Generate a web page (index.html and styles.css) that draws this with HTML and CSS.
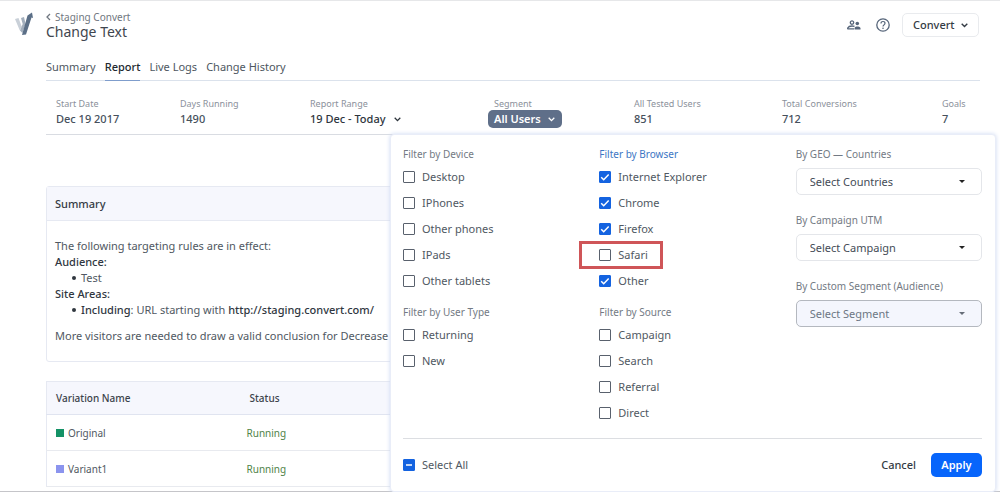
FILE: index.html
```html
<!DOCTYPE html>
<html lang="en">
<head>
<meta charset="utf-8">
<title>Change Text – Report</title>
<link rel="stylesheet" href="styles.css">
</head>
<body>
<div class="page">
  <header class="header">
    <svg class="logo" width="19" height="24" viewBox="0 0 19 24">
      <path d="M0 7l3.500-1 3.200 8.500-1.900 4z" fill="#c9d0d8"/>
      <path d="M6 6l3-1 1.600 7-3.200 9-2.400-2.500L7.700 12z" fill="#a3afbd"/>
      <path d="M12.500 3.500L17 .5l1 5.500-1.500-.4L11 22.500 7 23z" fill="#5b6f87"/>
    </svg>
    <div class="titles">
      <a class="back" href="#"><svg width="5" height="8" viewBox="0 0 5 8"><path d="M4 1L1 4l3 3" fill="none" stroke="currentColor" stroke-width="1.300"/></svg>Staging Convert</a>
      <h1 class="title">Change Text</h1>
    </div>
    <div class="tools">
      <button class="icon-button" aria-label="Collaborators"><svg width="14" height="10" viewBox="0 0 14 10"><circle cx="5" cy="2.600" r="1.700" fill="none" stroke="currentColor" stroke-width="1.300"/><circle cx="10.300" cy="3.500" r="1.800" fill="currentColor"/><path d="M.7 9.200V8C1.500 6.400 3.200 6 5 6c1 0 1.800.1 2.500.4M.7 8.900H7" fill="none" stroke="currentColor" stroke-width="1.300"/><path d="M7.500 9.600V8c.6-1.200 1.700-1.500 2.800-1.500 1.200 0 2.500.4 3.200 1.500v1.600z" fill="currentColor"/></svg></button>
      <button class="icon-button" aria-label="Help"><svg width="14" height="14" viewBox="0 0 14 14"><circle cx="7" cy="7" r="6.200" fill="none" stroke="currentColor" stroke-width="1.300"/><path d="M5 5.500C5 4.200 5.900 3.500 7 3.500s2 .7 2 1.800C9 6.800 7 6.900 7 8.500" fill="none" stroke="currentColor" stroke-width="1.200"/><circle cx="7" cy="10.300" r=".8" fill="currentColor"/></svg></button>
      <button class="account">Convert <svg width="7" height="5" viewBox="0 0 7 5"><path d="M.7.8l2.800 2.800L6.300.8" fill="none" stroke="currentColor" stroke-width="1.400"/></svg></button>
    </div>
  </header>

  <main class="main">
    <nav class="tabs">
      <a class="tab" href="#">Summary</a>
      <a class="tab tab-active" href="#">Report</a>
      <a class="tab" href="#">Live Logs</a>
      <a class="tab" href="#">Change History</a>
    </nav>

    <section class="stats">
      <div><div class="stat-label">Start Date</div><div class="stat-value">Dec 19 2017</div></div>
      <div><div class="stat-label">Days Running</div><div class="stat-value">1490</div></div>
      <div><div class="stat-label">Report Range</div><button class="range">19 Dec - Today <svg width="7" height="5" viewBox="0 0 7 5"><path d="M.7.8l2.800 2.800L6.300.8" fill="none" stroke="currentColor" stroke-width="1.300"/></svg></button></div>
      <div><div class="stat-label stat-label-inset">Segment</div><button class="segment" aria-expanded="true">All Users <svg width="7" height="5" viewBox="0 0 7 5"><path d="M.7.8l2.800 2.800L6.300.8" fill="none" stroke="currentColor" stroke-width="1.300"/></svg></button></div>
      <div><div class="stat-label">All Tested Users</div><div class="stat-value">851</div></div>
      <div><div class="stat-label">Total Conversions</div><div class="stat-value">712</div></div>
      <div><div class="stat-label">Goals</div><div class="stat-value">7</div></div>
    </section>

    <div class="content">
      <section class="card">
        <h2 class="card-title">Summary</h2>
        <div class="card-body">
          <p>The following targeting rules are in effect:</p>
          <p class="strong">Audience:</p>
          <ul><li>Test</li></ul>
          <p class="strong">Site Areas:</p>
          <ul><li><span class="strong">Including</span>: URL starting with <span class="strong">http://staging.convert.com/</span></li></ul>
          <p class="note">More visitors are needed to draw a valid conclusion for Decrease</p>
        </div>
      </section>

      <table class="variations">
        <thead><tr><th class="name-col">Variation Name</th><th>Status</th></tr></thead>
        <tbody>
          <tr><td><span class="swatch swatch-green"></span>Original</td><td class="running">Running</td></tr>
          <tr><td><span class="swatch swatch-violet"></span>Variant1</td><td class="running">Running</td></tr>
        </tbody>
      </table>

      <form class="panel">
        <div class="filters">
          <div class="column">
            <fieldset><legend>Filter by Device</legend>
              <label class="check"><input type="checkbox">Desktop</label>
              <label class="check"><input type="checkbox">IPhones</label>
              <label class="check"><input type="checkbox">Other phones</label>
              <label class="check"><input type="checkbox">IPads</label>
              <label class="check"><input type="checkbox">Other tablets</label>
            </fieldset>
            <fieldset><legend>Filter by User Type</legend>
              <label class="check"><input type="checkbox">Returning</label>
              <label class="check"><input type="checkbox">New</label>
            </fieldset>
          </div>
          <div class="column">
            <fieldset><legend class="active">Filter by Browser</legend>
              <label class="check"><input type="checkbox" checked>Internet Explorer</label>
              <label class="check"><input type="checkbox" checked>Chrome</label>
              <label class="check"><input type="checkbox" checked>Firefox</label>
              <label class="check check-marked"><input type="checkbox">Safari</label>
              <label class="check"><input type="checkbox" checked>Other</label>
            </fieldset>
            <fieldset><legend>Filter by Source</legend>
              <label class="check"><input type="checkbox">Campaign</label>
              <label class="check"><input type="checkbox">Search</label>
              <label class="check"><input type="checkbox">Referral</label>
              <label class="check"><input type="checkbox">Direct</label>
            </fieldset>
          </div>
          <div class="column column-selects">
            <div class="field"><label for="geo">By GEO — Countries</label><select id="geo"><option>Select Countries</option></select></div>
            <div class="field"><label for="utm">By Campaign UTM</label><select id="utm"><option>Select Campaign</option></select></div>
            <div class="field"><label for="custom">By Custom Segment (Audience)</label><select id="custom" disabled><option>Select Segment</option></select></div>
          </div>
        </div>
        <div class="actions">
          <label class="check"><input type="checkbox" class="partial">Select All</label>
          <button type="button" class="cancel">Cancel</button>
          <button type="button" class="apply">Apply</button>
        </div>
      </form>
    </div>
  </main>
</div>
</body>
</html>
```

FILE: styles.css
```css
* { box-sizing: border-box; }
body {
  margin: 0;
  background: #fff;
  color: #505862;
  font: 11px/16px "Noto Sans", sans-serif;
}
button {
  border: 0;
  padding: 0;
  background: none;
  color: inherit;
  font: inherit;
}
a { color: inherit; text-decoration: none; }
.page { min-height: 100vh; border-top: 1px solid #e6e7e9; border-bottom: 1px solid #c5c5c9; }

.header { display: flex; height: 44px; padding: 11px 21px 0 15px; align-items: flex-start; }
.titles { margin-left: 12px; }
.back { display: flex; align-items: center; gap: 4px; height: 10px; font-size: 10px; color: #707780; }
.title { margin: 0; font-size: 14px; line-height: 20px; font-weight: 400; color: #3f464e; }
.tools { display: flex; align-items: center; gap: 15px; margin-left: auto; padding-top: 1px; color: #56657a; }
.icon-button { display: flex; }
.account {
  display: flex;
  align-items: center;
  justify-content: space-between;
  width: 77px;
  height: 24px;
  margin-left: -3px;
  padding: 0 10px;
  border: 1px solid #e9ebee;
  border-radius: 5px;
  color: #343b44;
  font-weight: 500;
}

.main { padding: 0 0 0 46px; }
.tabs { display: flex; gap: 9px; height: 36px; padding-top: 12px; margin-right: 20px; border-bottom: 1px solid #dbe2ec; }
.tab { height: 24px; line-height: 20px; color: #4e5761; }
.tab-active { color: #22292f; font-weight: 500; border-bottom: 1px solid #7f9dcc; }

.stats {
  display: grid;
  grid-template-columns: 124fr 130fr 178fr 146fr 148fr 160fr 48fr;
  height: 54px;
  margin-right: 10px;
  padding: 17px 0 0 10px;
  border-bottom: 1px solid #d9dce2;
}
.stat-label { font-size: 9px; line-height: 12px; color: #8b919b; white-space: nowrap; }
.stat-label-inset { padding-left: 6px; }
.stat-value { line-height: 18px; color: #46505c; font-weight: 500; }
.range { display: flex; align-items: center; gap: 8px; height: 18px; font-weight: 500; color: #2e353d; }
.segment {
  display: flex;
  align-items: center;
  justify-content: space-between;
  width: 74px;
  height: 18px;
  padding: 0 7px 0 6px;
  border-radius: 5px;
  background: #5f6f89;
  color: #fff;
  font-weight: 600;
}

.content { position: relative; padding-top: 51px; }
.card { height: 176px; margin-right: 20px; border: 1px solid #e6e9f2; border-radius: 3px; }
.card-title {
  margin: 0;
  padding: 0 8px;
  line-height: 33px;
  font-size: 11px;
  font-weight: 500;
  color: #343b44;
  background: #f6f7fd;
  border-bottom: 1px solid #e6e9f2;
}
.card-body { padding: 17px 8px; white-space: nowrap; overflow: hidden; }
.card-body p { margin: 0; }
.card-body ul { margin: 0; padding-left: 17px; list-style: none; }
.card-body li { display: flex; align-items: center; white-space: pre; }
.card-body li::before { content: ""; width: 4px; height: 4px; margin-right: 5px; border-radius: 50%; background: #30373f; }
.card-body .note { margin-top: 10px; }
.strong { color: #30373f; font-weight: 500; }

.variations { width: calc(100% - 20px); margin-top: 19px; border: 1px solid #e6e9f2; border-collapse: collapse; }
.variations th { height: 33px; padding: 0 9px; background: #f6f7fd; text-align: left; font-size: 10px; font-weight: 500; color: #3c434b; border-bottom: 1px solid #e0e4f0; }
.variations td { height: 36px; padding: 0 9px; font-size: 10px; border-bottom: 1px solid #e8eaef; }
.name-col { width: 194px; }
.variations .running { color: #4f8348; padding-left: 6px; }
.swatch { display: inline-block; width: 8px; height: 8px; margin-right: 4px; }
.swatch-green { background: #149266; }
.swatch-violet { background: #8b94ee; }

.panel {
  position: absolute;
  top: -1px;
  right: 4px;
  width: 606px;
  padding: 10px 13px 0 12px;
  background: #fff;
  border: 1px solid #e9edf8;
  border-radius: 4px;
  box-shadow: 0 0 4px #cdd9f2;
}
.filters { display: grid; grid-template-columns: repeat(3, 1fr); gap: 10px; padding-bottom: 12px; border-bottom: 1px solid #dcdee2; }
.column { display: flex; flex-direction: column; gap: 9px; }
.column-selects { gap: 16px; }
fieldset { margin: 0; padding: 0; border: 0; min-width: 0; }
legend, .field label { display: block; padding: 0; height: 19px; line-height: 18px; font-size: 10px; color: #737a84; }
legend.active { color: #3d76c4; }
.check { display: flex; align-items: center; gap: 7px; width: fit-content; height: 26px; position: relative; }
.check input {
  appearance: none;
  width: 12px;
  height: 12px;
  margin: 0;
  border: 1px solid #59616d;
  border-radius: 1px;
  background: #fff center / 12px 12px no-repeat;
}
.check input:checked, .check .partial { border-color: #1463e0; background-color: #1463e0; }
.check input:checked { background-image: url("data:image/svg+xml,%3Csvg xmlns='http://www.w3.org/2000/svg' viewBox='0 0 12 12'%3E%3Cpath d='M2.200 6.200l2.500 2.500 5-5.200' fill='none' stroke='white' stroke-width='1.500'/%3E%3C/svg%3E"); }
.check .partial { background-image: url("data:image/svg+xml,%3Csvg xmlns='http://www.w3.org/2000/svg' viewBox='0 0 12 12'%3E%3Cpath d='M3 6h6' stroke='white' stroke-width='1.500'/%3E%3C/svg%3E"); }
.check-marked::after { content: ""; position: absolute; inset: -1px -15px -1px -20px; border: 3px solid #cf5558; }

.field { display: flex; flex-direction: column; gap: 4px; }
select {
  appearance: none;
  width: 100%;
  height: 27px;
  padding: 0 13px;
  border: 1px solid #e4e6ea;
  border-radius: 5px;
  font: inherit;
  color: #444c56;
  background: #fff url("data:image/svg+xml,%3Csvg xmlns='http://www.w3.org/2000/svg' viewBox='0 0 6 3'%3E%3Cpath d='M0 0h6L3 3z' fill='%23222'/%3E%3C/svg%3E") right 16px center / 6px 3px no-repeat;
}
select:disabled {
  opacity: 1;
  color: #6d7684;
  border-color: #b4b8bf;
  background-color: #f4f6fd;
  background-image: url("data:image/svg+xml,%3Csvg xmlns='http://www.w3.org/2000/svg' viewBox='0 0 6 3'%3E%3Cpath d='M0 0h6L3 3z' fill='%23666d78'/%3E%3C/svg%3E");
}

.actions { display: flex; align-items: center; height: 52px; }
.cancel { margin-left: auto; margin-right: 15px; color: #343b44; font-weight: 500; }
.apply { width: 51px; height: 24px; border-radius: 5px; background: #0765fb; color: #fff; font-weight: 600; }
```
